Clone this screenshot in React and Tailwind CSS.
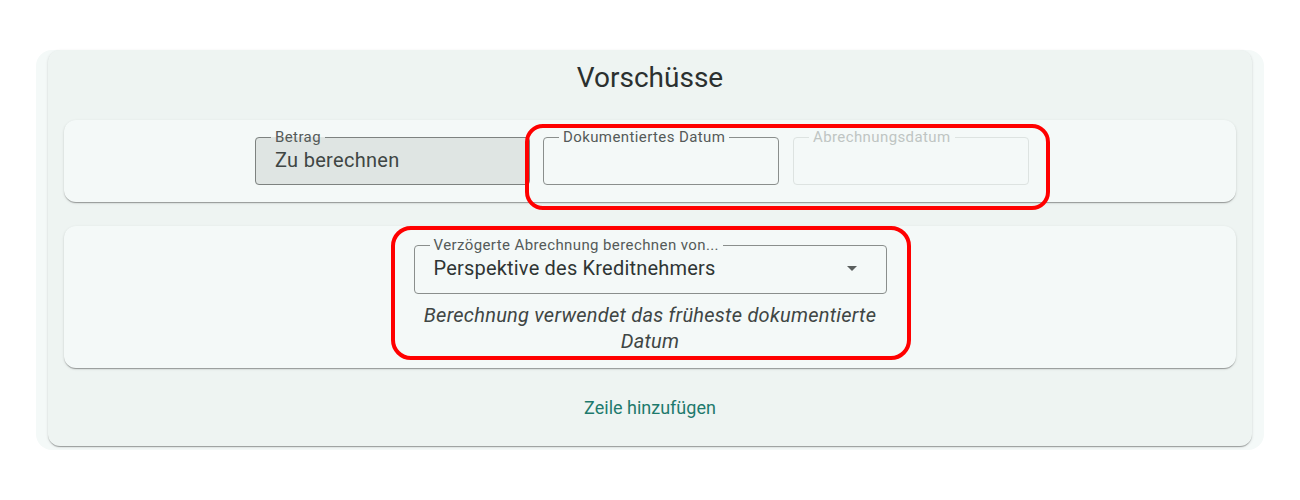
import React from 'react';

const font = { fontFamily: 'Roboto, "Noto Sans", sans-serif' };

const Field = ({ label, value, width, tone = 'normal' }) => {
  const boxes = {
    normal: 'border-[#8a8f8d] bg-[#f4f9f8]',
    filled: 'border-[#7d8280] bg-[#dfe5e3]',
    disabled: 'border-[#dde3e1] bg-[#f4f9f8]',
  };
  const labels = {
    normal: 'text-[#555b59]',
    filled: 'text-[#555b59]',
    disabled: 'text-[#bfc5c3]',
  };
  return (
    <fieldset className={`border rounded-[4px] h-[55px] pl-[19px] pr-3 pt-[4px] ${boxes[tone]} ${width}`}>
      <legend className={`-ml-[4px] px-[4px] text-[15px] leading-[14px] tracking-[0.4px] ${labels[tone]}`}>{label}</legend>
      <div className="text-[20px] leading-[24px] tracking-[0.3px] text-[#3f4644]">{value}</div>
    </fieldset>
  );
};

export default function App() {
  return (
    <div className="bg-white h-[500px] pt-[50px] px-[36px]" style={font}>
      <div className="bg-[#f4f9f8] rounded-[16px] px-3 pb-1">
        <div className="bg-[#eef4f2] rounded-xl px-4 pt-3 pb-[21px] shadow-[0_2px_1px_-1px_rgba(0,0,0,0.2),0_1px_1px_0_rgba(0,0,0,0.14),0_1px_3px_0_rgba(0,0,0,0.12)]">
          <h2 className="text-center text-[28px] leading-[32px] text-[#2b302f] mb-[26px]">Vorschüsse</h2>

          <div className="bg-[#f4f9f8] rounded-xl pt-[10px] pb-[17px] pr-4 flex justify-center shadow-[0_2px_1px_-1px_rgba(0,0,0,0.2),0_1px_1px_0_rgba(0,0,0,0.14),0_1px_3px_0_rgba(0,0,0,0.12)]">
            <Field label="Betrag" value="Zu berechnen" width="w-[275px]" tone="filled" />
            <div className="relative flex gap-[14px] ml-[13px]">
              <Field label="Dokumentiertes Datum" value="" width="w-[236px]" />
              <Field label="Abrechnungsdatum" value="" width="w-[236px]" tone="disabled" />
              <div className="absolute -left-[18px] -right-[21px] -top-[6px] -bottom-[25px] border-4 border-[#ff0000] rounded-[18px] pointer-events-none" />
            </div>
          </div>

          <div className="bg-[#f4f9f8] rounded-xl mt-6 pt-3 pb-[14px] flex justify-center shadow-[0_2px_1px_-1px_rgba(0,0,0,0.2),0_1px_1px_0_rgba(0,0,0,0.14),0_1px_3px_0_rgba(0,0,0,0.12)]">
            <div className="relative w-[473px]">
              <fieldset className="border border-[#8a8f8d] rounded-[4px] h-[56px] pl-[19px] pr-[22px] pt-[4px]">
                <legend className="-ml-[4px] px-[4px] text-[15px] leading-[14px] tracking-[0.4px] text-[#555b59]">
                  Verzögerte Abrechnung berechnen von...
                </legend>
                <div className="flex items-center justify-between">
                  <span className="text-[20px] leading-[24px] tracking-[0.2px] text-[#2f3534]">Perspektive des Kreditnehmers</span>
                  <svg width="24" height="24" viewBox="0 0 24 24">
                    <path d="M7 10l5 5 5-5z" fill="#5a5f5e" />
                  </svg>
                </div>
              </fieldset>
              <p className="mt-2 text-center italic text-[20px] leading-[26px] tracking-[0.25px] text-[#3f4644]">
                Berechnung verwendet das früheste dokumentierte Datum
              </p>
              <div className="absolute -left-[23px] -right-[24px] -top-[12px] -bottom-[6px] border-4 border-[#ff0000] rounded-[20px] pointer-events-none" />
            </div>
          </div>

          <div className="mt-[21px] flex justify-center">
            <button className="h-9 px-2 text-[18px] text-[#1e7a6d]">Zeile hinzufügen</button>
          </div>
        </div>
      </div>
    </div>
  );
}
